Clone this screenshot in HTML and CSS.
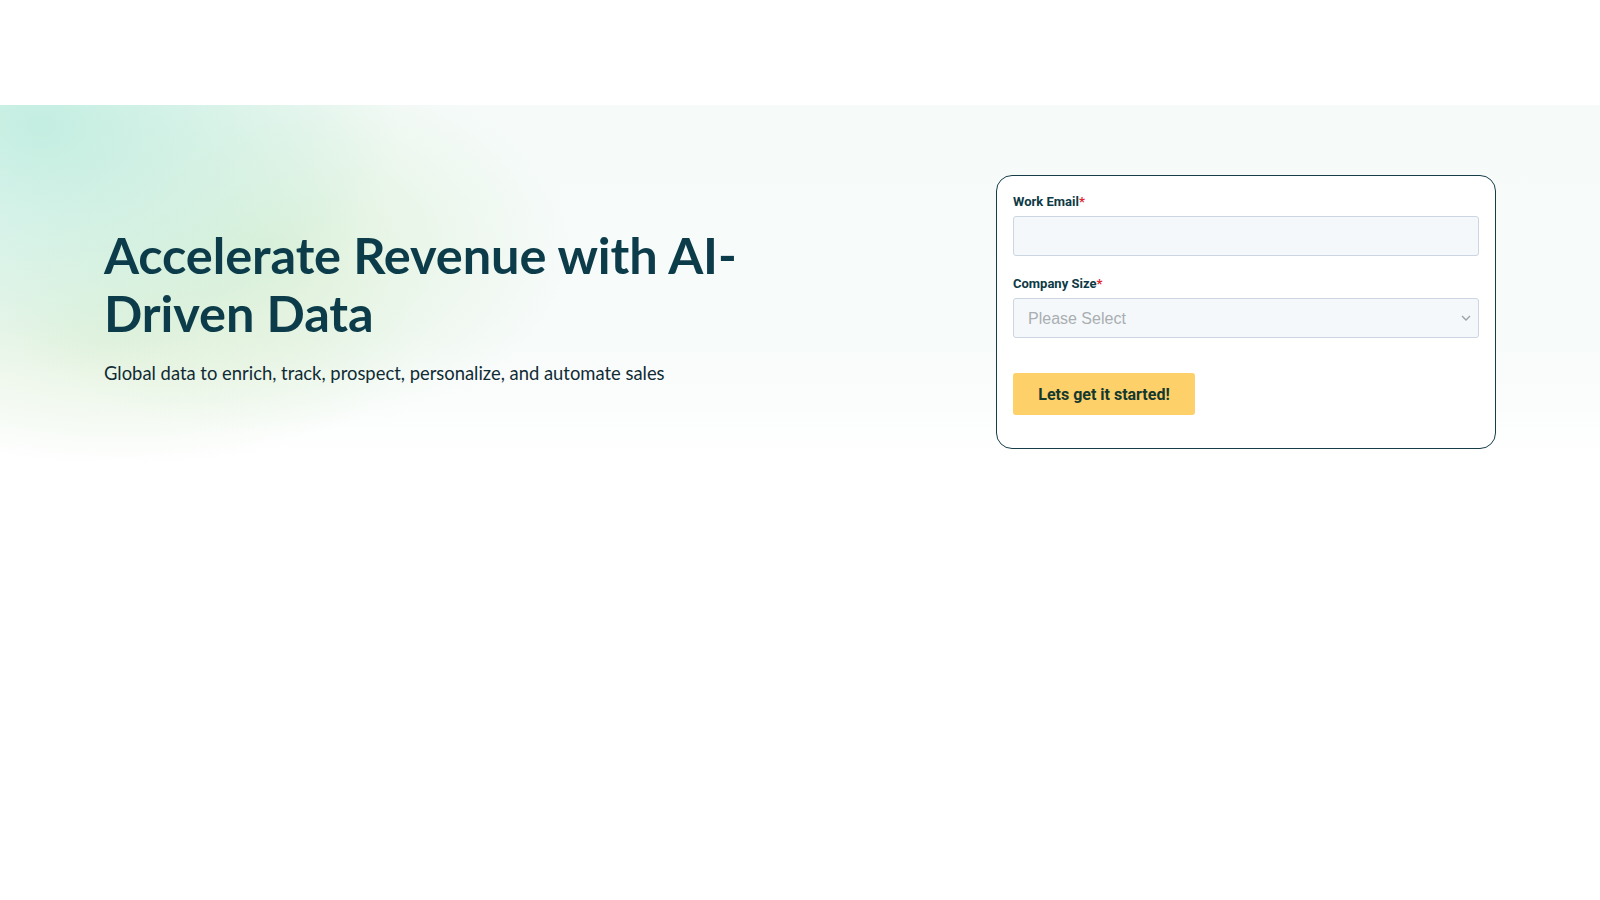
FILE: index.html
```html
<!DOCTYPE html>
<html>
<head>
  <meta charset="UTF-8">
  <title>Accelerate Revenue with AI-Driven Data</title>
  <link rel="stylesheet" href="styles.css">
</head>
<body>
  <header class="top-bar"></header>

  <section class="hero">
    <div class="hero-inner">
      <div class="hero-copy">
        <h1>Accelerate Revenue with AI-Driven Data</h1>
        <p class="lead">Global data to enrich, track, prospect, personalize, and automate sales</p>
      </div>

      <form class="signup-card">
        <div class="field">
          <label for="email">Work Email<span class="req">*</span></label>
          <input type="email" id="email">
        </div>
        <div class="field">
          <label for="size">Company Size<span class="req">*</span></label>
          <div class="select-wrap">
            <select id="size">
              <option>Please Select</option>
            </select>
            <svg class="chevron" width="10" height="6" viewBox="0 0 10 6">
              <path d="M1 1l4 4 4-4" fill="none" stroke="#9aa3a8" stroke-width="1.4"/>
            </svg>
          </div>
        </div>
        <button type="button" class="submit">Lets get it started!</button>
      </form>
    </div>
  </section>
</body>
</html>
```

FILE: styles.css
```css
body {
  margin: 0;
  background: #fff;
  font-family: Lato, 'Noto Sans', sans-serif;
}
.top-bar {
  height: 105px;
  background: #fff;
}
.hero {
  padding-bottom: 16px;
  background:
    radial-gradient(ellipse 360px 250px at 40px 20px, rgba(190, 236, 222, 0.9), rgba(190, 236, 222, 0) 100%),
    radial-gradient(ellipse 300px 190px at 270px 140px, rgba(214, 238, 208, 0.75), rgba(214, 238, 208, 0) 100%),
    radial-gradient(ellipse 300px 130px at 120px 230px, rgba(222, 240, 212, 0.7), rgba(222, 240, 212, 0) 100%),
    linear-gradient(180deg, #f6fbfa 0%, #f7fbfa 65%, #ffffff 100%);
}
.hero-inner {
  display: flex;
  justify-content: space-between;
  align-items: flex-start;
  padding: 70px 104px 0;
}
.hero-copy {
  width: 680px;
  padding-top: 51px;
}
h1 {
  margin: 0;
  font-size: 50.5px;
  line-height: 58px;
  font-weight: 700;
  color: #0c3c4a;
  letter-spacing: -0.1px;
}
.lead {
  margin: 20px 0 0;
  font-size: 18.4px;
  color: #102b34;
}
.signup-card {
  width: 466px;
  padding: 17px 16px 33px;
  border: 1px solid #163d48;
  border-radius: 16px;
  background: #fff;
}
.field {
  margin-bottom: 19px;
}
label {
  display: block;
  margin-bottom: 5px;
  font-family: Roboto, 'Liberation Sans', sans-serif;
  font-size: 13px;
  line-height: 18px;
  font-weight: 700;
  color: #0d3a45;
}
.req {
  color: #e0272f;
}
input, select {
  display: block;
  width: 100%;
  height: 40px;
  box-sizing: border-box;
  padding: 0 14px;
  border: 1px solid #cbd6e2;
  border-radius: 3px;
  background: #f5f8fa;
  font-family: 'Liberation Sans', Arial, sans-serif;
  font-size: 16px;
  color: #a9aeb2;
  appearance: none;
}
.select-wrap {
  position: relative;
}
.chevron {
  position: absolute;
  right: 8px;
  top: 17px;
}
.submit {
  display: block;
  margin-top: 35px;
  width: 182px;
  height: 42px;
  border: none;
  border-radius: 3px;
  background: #fdd06a;
  font-family: Roboto, 'Liberation Sans', sans-serif;
  font-size: 16px;
  font-weight: 700;
  color: #15382d;
  cursor: pointer;
}
```
